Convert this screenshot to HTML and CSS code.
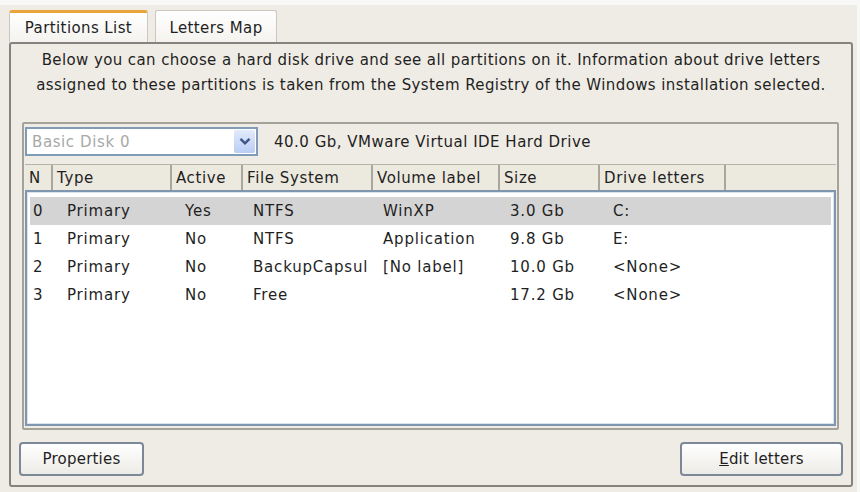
FILE: index.html
```html
<!DOCTYPE html>
<html>
<head>
<meta charset="utf-8">
<link rel="stylesheet" href="styles.css">
</head>
<body>
<div class="window">
  <div class="tabs">
    <div class="tab active">Partitions List</div>
    <div class="tab">Letters Map</div>
  </div>
  <div class="frame">
    <p class="desc">Below you can choose a hard disk drive and see all partitions on it. Information about drive letters<br>assigned to these partitions is taken from the System Registry of the Windows installation selected.</p>
    <div class="group">
      <div class="diskbar">
        <div class="combo">
          <span class="combo-text">Basic Disk 0</span>
          <span class="combo-btn"><svg width="12" height="9" viewBox="0 0 12 9"><path d="M1.5 1.8 L6 6.3 L10.5 1.8" fill="none" stroke="#3f5585" stroke-width="2.4"/></svg></span>
        </div>
        <span class="disk-info">40.0 Gb, VMware Virtual IDE Hard Drive</span>
      </div>
      <div class="header">
        <div class="hcell">N</div>
        <div class="hcell">Type</div>
        <div class="hcell">Active</div>
        <div class="hcell">File System</div>
        <div class="hcell">Volume label</div>
        <div class="hcell">Size</div>
        <div class="hcell">Drive letters</div>
        <div class="hcell last"></div>
      </div>
      <div class="list">
        <div class="row selected"><span>0</span><span>Primary</span><span>Yes</span><span>NTFS</span><span>WinXP</span><span>3.0 Gb</span><span>C:</span></div>
        <div class="row"><span>1</span><span>Primary</span><span>No</span><span>NTFS</span><span>Application</span><span>9.8 Gb</span><span>E:</span></div>
        <div class="row"><span>2</span><span>Primary</span><span>No</span><span>BackupCapsul</span><span>[No label]</span><span>10.0 Gb</span><span>&lt;None&gt;</span></div>
        <div class="row"><span>3</span><span>Primary</span><span>No</span><span>Free</span><span></span><span>17.2 Gb</span><span>&lt;None&gt;</span></div>
      </div>
    </div>
    <div class="buttons">
      <button class="btn btn-props">Properties</button>
      <button class="btn btn-edit"><span class="ul">E</span>dit letters</button>
    </div>
  </div>
</div>
</body>
</html>
```
FILE: styles.css
```css
* { box-sizing: border-box; }
body {
  margin: 0;
  background: #f8f8f6;
  font-family: "DejaVu Sans", sans-serif;
  color: #1f1f1f;
}
.window {
  margin: 5px 3px 0 0;
  padding: 5px 0 0 9px;
  background: #efece5;
  height: 487px;
}
.tabs {
  display: flex;
  gap: 7px;
  height: 32px;
}
.tab {
  height: 32px;
  padding-top: 2px;
  background: linear-gradient(#ffffff, #f4f3ef);
  border: 1px solid #c9c7bf;
  border-bottom: none;
  border-radius: 3px 3px 0 0;
  font-size: 15px;
  letter-spacing: 0.4px;
  display: flex;
  align-items: center;
  justify-content: center;
  width: 122px;
}
.tab.active {
  width: 139px;
  border-top: 3px solid #e9a43c;
  padding-top: 0;
}
.frame {
  width: 844px;
  height: 445px;
  border: 2px solid #85847c;
  border-radius: 3px;
  background: #efece5;
}
.desc {
  margin: 0;
  padding-top: 4px;
  text-align: center;
  font-size: 15px;
  letter-spacing: 0.4px;
  line-height: 25px;
}
.group {
  margin: 24px 12px 0 11px;
  height: 308px;
  border: 2px solid #a4a299;
  border-radius: 2px;
  padding: 3px 1px 0 1px;
}
.diskbar {
  display: flex;
  align-items: center;
  height: 29px;
}
.combo {
  width: 233px;
  height: 29px;
  border: 2px solid #7f9db9;
  background: #fff;
  display: flex;
  align-items: center;
  justify-content: space-between;
  padding: 1px;
}
.combo-text {
  padding-left: 4px;
  font-size: 15px;
  letter-spacing: 0.6px;
  color: #a8a8a8;
}
.combo-btn {
  width: 21px;
  height: 100%;
  border-radius: 2px;
  background: linear-gradient(#e2eafc, #b9cdf4);
  display: flex;
  align-items: center;
  justify-content: center;
}
.disk-info {
  margin-left: 16px;
  font-size: 15px;
  letter-spacing: 0.5px;
}
.header {
  margin-top: 8px;
  height: 26px;
  display: grid;
  grid-template-columns: 28px 119px 71px 130px 127px 100px 126px 1fr;
  background: #ece9df;
  border-top: 1px solid #b5b3aa;
}
.hcell {
  border-right: 2px solid #a9a79d;
  padding-left: 4px;
  font-size: 15px;
  letter-spacing: 0.6px;
  display: flex;
  align-items: center;
  white-space: nowrap;
}
.hcell.last { border-right: none; }
.list {
  height: 236px;
  border: 2px solid #7e96b0;
  box-shadow: inset 0 0 0 1px #d8e4f0;
  background: #fff;
  padding: 5px 3px;
}
.row {
  display: grid;
  grid-template-columns: 34px 118px 68px 130px 127px 103px 1fr;
  height: 28px;
  align-items: center;
  padding-left: 3px;
  font-size: 15px;
  letter-spacing: 0.8px;
  white-space: nowrap;
}
.row.selected { background: #d4d4d4; }
.buttons {
  margin-top: 12px;
  display: flex;
  justify-content: space-between;
  padding: 0 8px;
}
.btn {
  height: 34px;
  border: 2px solid #7c8898;
  border-radius: 4px;
  background: linear-gradient(#ffffff, #ecebe6);
  font-family: "DejaVu Sans", sans-serif;
  font-size: 15px;
  letter-spacing: 0.2px;
  color: #1f1f1f;
}
.btn-props { width: 125px; }
.btn-edit { width: 163px; }
.ul { text-decoration: underline; }
```
